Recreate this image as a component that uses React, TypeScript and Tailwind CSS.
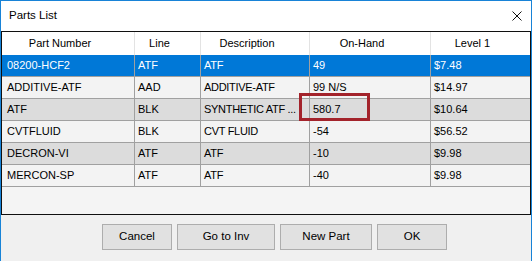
const rows = [
  { part: "08200-HCF2", line: "ATF", desc: "ATF", onHand: "49", level: "$7.48" },
  { part: "ADDITIVE-ATF", line: "AAD", desc: "ADDITIVE-ATF", onHand: "99 N/S", level: "$14.97" },
  { part: "ATF", line: "BLK", desc: "SYNTHETIC ATF ...", onHand: "580.7", level: "$10.64" },
  { part: "CVTFLUID", line: "BLK", desc: "CVT FLUID", onHand: "-54", level: "$56.52" },
  { part: "DECRON-VI", line: "ATF", desc: "ATF", onHand: "-10", level: "$9.98" },
  { part: "MERCON-SP", line: "ATF", desc: "ATF", onHand: "-40", level: "$9.98" },
];

export default function App() {
  return (
    <div className="w-[532px] h-[261px] bg-[#f0f0f0] border-x border-t border-[#1883d7] flex flex-col overflow-hidden font-['Liberation_Sans',Arial,sans-serif] text-black">
      {/* title bar */}
      <div className="h-[30px] bg-white flex items-center pl-2 pr-[9px] shrink-0">
        <span className="text-[11.5px]">Parts List</span>
        <svg className="ml-auto" width="10" height="10" viewBox="0 0 10 10">
          <path d="M0.5 0.5 L9.5 9.5 M9.5 0.5 L0.5 9.5" stroke="#111" strokeWidth="1" fill="none" />
        </svg>
      </div>

      {/* grid */}
      <div className="relative h-[184px] border border-[#101010] bg-[#f4f4f4] shrink-0 text-[11px]">
        <div className="flex h-[23px] bg-white">
          <div className="w-[133px] border-r border-[#e3e3e3] flex items-center justify-center pr-4">Part Number</div>
          <div className="w-[66px] border-r border-[#e3e3e3] flex items-center justify-center pr-4">Line</div>
          <div className="w-[109px] border-r border-[#e3e3e3] flex items-center justify-center pr-4">Description</div>
          <div className="w-[121px] border-r border-[#e3e3e3] flex items-center justify-center pr-4">On-Hand</div>
          <div className="flex-1 flex items-center justify-center pr-4">Level 1</div>
        </div>
        {rows.map((r, i) => {
          const bg = i === 0 ? "bg-[#0078d7] text-white" : i % 2 === 1 ? "bg-[#f3f3f3]" : "bg-[#dcdcdc]";
          return (
            <div key={r.part} className={`flex h-[22px] border-b border-[#a0a0a0] ${bg}`}>
              <div className="w-[133px] border-r border-[#a0a0a0] flex items-center pl-[5px] whitespace-nowrap">{r.part}</div>
              <div className="w-[66px] border-r border-[#a0a0a0] flex items-center pl-[3px] whitespace-nowrap">{r.line}</div>
              <div className="w-[109px] border-r border-[#a0a0a0] flex items-center pl-[3px] whitespace-nowrap overflow-hidden tracking-[-0.3px]">{r.desc}</div>
              <div className="w-[121px] border-r border-[#a0a0a0] flex items-center pl-[3px] whitespace-nowrap">{r.onHand}</div>
              <div className="flex-1 flex items-center pl-[3px] whitespace-nowrap">{r.level}</div>
            </div>
          );
        })}
        {/* highlight annotation */}
        <div className="absolute left-[297px] top-[61px] w-[71px] h-[28px] border-[3px] border-[#a3232b]" />
      </div>

      {/* buttons */}
      <div className="flex gap-[5px] pl-[101px] mt-[9px] text-[11.5px]">
        <button className="w-[70px] h-[26px] bg-[#e1e1e1] border border-[#adadad]">Cancel</button>
        <button className="w-[98px] h-[26px] bg-[#e1e1e1] border border-[#adadad]">Go to Inv</button>
        <button className="w-[92px] h-[26px] bg-[#e1e1e1] border border-[#adadad]">New Part</button>
        <button className="w-[70px] h-[26px] bg-[#e1e1e1] border border-[#adadad]">OK</button>
      </div>
    </div>
  );
}
